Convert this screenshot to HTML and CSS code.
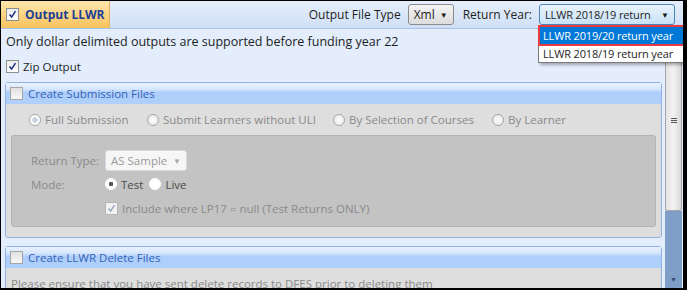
FILE: index.html
```html
<!DOCTYPE html>
<html lang="en">
<head>
    <meta charset="UTF-8">
    <title>Output LLWR</title>
    <link rel="stylesheet" href="styles.css">
</head>
<body>
<div class="window">
    <header class="toolbar">
        <div class="tab">
            <span class="cb on"><svg viewBox="0 0 13 13"><path d="M3 6.5 L5.5 9.5 L10 2.5" /></svg></span>
            <span class="tab-title">Output LLWR</span>
        </div>
        <div class="tools">
            <span class="lbl">Output File Type</span>
            <div class="select xml">Xml <span class="arrow">&#9660;</span></div>
            <span class="lbl">Return Year:</span>
            <div class="select year">LLWR 2018/19 return <span class="arrow">&#9660;</span>
                <ul class="dropdown">
                    <li class="picked">LLWR 2019/20 return year</li>
                    <li>LLWR 2018/19 return year</li>
                </ul>
            </div>
        </div>
    </header>
    <div class="main">
        <div class="content">
            <p class="note">Only dollar delimited outputs are supported before funding year 22</p>
            <label class="row zip">
                <span class="cb on"><svg viewBox="0 0 13 13"><path d="M3 6.5 L5.5 9.5 L10 2.5" /></svg></span>
                Zip Output
            </label>

            <section class="group">
                <div class="group-head">
                    <span class="cb"></span>
                    Create Submission Files
                </div>
                <div class="group-body">
                    <div class="radios">
                        <span class="radio-item full"><span class="radio sel"></span>Full Submission</span>
                        <span class="radio-item no-uli"><span class="radio"></span>Submit Learners without ULI</span>
                        <span class="radio-item courses"><span class="radio"></span>By Selection of Courses</span>
                        <span class="radio-item"><span class="radio"></span>By Learner</span>
                    </div>
                    <div class="panel">
                        <div class="field">
                            <span class="field-lbl">Return Type:</span>
                            <div class="select sample">AS Sample <span class="arrow">&#9660;</span></div>
                        </div>
                        <div class="field">
                            <span class="field-lbl">Mode:</span>
                            <span class="radio-item"><span class="radio dot"></span>Test</span>
                            <span class="radio-item"><span class="radio plain"></span>Live</span>
                        </div>
                        <div class="field">
                            <span class="field-lbl"></span>
                            <span class="cb on dim"><svg viewBox="0 0 13 13"><path d="M3 6.5 L5.5 9.5 L10 2.5" /></svg></span>
                            Include where LP17 = null (Test Returns ONLY)
                        </div>
                    </div>
                </div>
            </section>

            <section class="group">
                <div class="group-head">
                    <span class="cb"></span>
                    Create LLWR Delete Files
                </div>
                <div class="group-body">
                    <p class="warn">Please ensure that you have sent delete records to DFES prior to deleting them</p>
                </div>
            </section>
        </div>
        <div class="scrollbar">
            <div class="thumb"><span class="grip"></span></div>
            <div class="track"><span class="down">&#9660;</span></div>
        </div>
    </div>
</div>
</body>
</html>
```

FILE: styles.css
```css
body {
    margin: 0;
    font-family: "Open Sans", "Noto Sans", sans-serif;
    font-size: 11.5px;
    color: #1e1e1e;
    white-space: nowrap;
}

.window {
    width: 687px;
    height: 290px;
    box-sizing: border-box;
    border-style: solid;
    border-color: #000;
    border-width: 1px 4px 2px 1px;
    background: #e3edfb;
    overflow: hidden;
    display: flex;
    flex-direction: column;
}

.toolbar {
    height: 27px;
    flex: none;
    display: flex;
    background: linear-gradient(#e6effb, #cfdff5);
    border-bottom: 1px solid #a9c3e6;
    font-size: 12px;
}

.tab {
    width: 109px;
    display: flex;
    align-items: center;
    padding-left: 5px;
    box-sizing: border-box;
    background: linear-gradient(#fde6ac, #f8c25e);
    border-right: 1px solid #e3b25c;
}
.tab-title {
    margin-left: 6px;
    font-weight: bold;
    font-size: 12px;
    color: #1c3f94;
}

.tools {
    flex: 1;
    display: flex;
    align-items: center;
    justify-content: flex-end;
    padding-right: 8px;
}
.lbl {
    margin-right: 7px;
}
.lbl + .select {
    margin-right: 9px;
}

.select {
    position: relative;
    height: 21px;
    box-sizing: border-box;
    display: flex;
    align-items: center;
    padding: 0 5px;
    border: 1px solid #8c8c8c;
    border-radius: 3px;
    background: linear-gradient(#f4f4f4, #dcdcdc);
}
.arrow {
    font-size: 8px;
    margin-left: auto;
    letter-spacing: 0;
}
.xml {
    width: 46px;
}
.year {
    width: 136px;
    font-size: 11px;
    letter-spacing: -0.15px;
    margin-right: 0 !important;
    border-color: #4f86b8;
    background: linear-gradient(#e9f3fc, #c8e1f6);
}

.dropdown {
    position: absolute;
    top: 20px;
    left: -2px;
    width: 145px;
    margin: 0;
    padding: 0;
    list-style: none;
    background: #fff;
    border: 1px solid #7a7a7a;
    box-shadow: 2px 2px 3px rgba(0, 0, 0, 0.3);
    z-index: 2;
}
.dropdown li {
    height: 17px;
    line-height: 17px;
    padding-left: 4px;
    font-size: 11px;
}
.dropdown .picked {
    background: #0078d7;
    color: #fff;
    outline: 2px solid #ea3a40;
    outline-offset: -1px;
    height: 19px;
    line-height: 19px;
}

.main {
    flex: 1;
    display: flex;
    min-height: 0;
}
.content {
    flex: 1;
    padding: 0 3px 0 4px;
    overflow: hidden;
}

.note {
    margin: 4px 0 0 1px;
    font-size: 12.5px;
}
.row {
    display: flex;
    align-items: center;
    gap: 4px;
    margin: 9px 0 0 1px;
}

.cb {
    width: 13px;
    height: 13px;
    box-sizing: border-box;
    border: 1px solid #8e8f8f;
    background: linear-gradient(#ececec, #fff);
    display: inline-flex;
    flex: none;
}
.cb svg {
    width: 11px;
    height: 11px;
}
.cb path {
    fill: none;
    stroke: #1a2c80;
    stroke-width: 1.8;
}
.cb.dim {
    border-color: #b5b5b5;
    background: #f2f2f2;
}
.cb.dim path {
    stroke: #9aa7c8;
}

.group {
    margin-top: 8px;
    border: 1px solid #8fb2e2;
    border-radius: 3px;
    background: #dedede;
}
.group-head {
    height: 21px;
    display: flex;
    align-items: center;
    gap: 5px;
    padding-left: 4px;
    color: #3463b7;
    background: linear-gradient(#eaf2fe, #d5e6fd 30%, #aecefb 45%, #b0d0fb);
}
.group-head .cb {
    border-color: #a7a7a7;
    background: linear-gradient(#e2e2e2, #f7f7f7);
}
.group-body {
    padding: 0 5px 10px 5px;
    color: #8a8a8a;
}

.radios {
    display: flex;
    height: 31px;
    align-items: center;
    padding-left: 18px;
}
.radio-item {
    display: inline-flex;
    align-items: center;
    gap: 4px;
}
.radios .full {
    width: 118px;
}
.radios .no-uli {
    width: 186px;
}
.radios .courses {
    width: 159px;
}
.radio {
    width: 12px;
    height: 12px;
    box-sizing: border-box;
    border-radius: 50%;
    border: 1px solid #a8a8a8;
    background: radial-gradient(#fdfdfd, #e4e4e4);
}
.radio.sel {
    background: radial-gradient(#c8d4e4 0 2.5px, #fbfbfb 3px);
}
.radio.dot {
    border-color: #fff;
    background: radial-gradient(#555 0 2px, #fff 2.5px);
}
.radio.plain {
    border-color: #fff;
    background: #fff;
}

.panel {
    background: #c3c3c3;
    border: 1px solid #b3b3b3;
    border-radius: 3px;
    padding: 12px 0 6px 19px;
}
.field {
    display: flex;
    align-items: center;
    height: 24px;
}
.field-lbl {
    width: 74px;
    flex: none;
}
.field .cb {
    margin-right: 4px;
}
.field .radio-item {
    margin-right: 6px;
    color: #4a4a4a;
}
.sample {
    width: 82px;
    border-color: #d8d8d8;
    background: #f6f6f6;
    color: #9a9a9a;
}
.sample .arrow {
    color: #a9a9a9;
}

.warn {
    margin: 8px 0 0 0;
}

.scrollbar {
    width: 17px;
    margin-right: 1px;
    flex: none;
    display: flex;
    flex-direction: column;
}
.thumb {
    height: 182px;
    box-sizing: border-box;
    border: 1px solid #a6a6a6;
    border-radius: 2px;
    background: linear-gradient(90deg, #e4e4e4, #f3f3f3 50%, #d8d8d8);
    display: flex;
    align-items: center;
    justify-content: center;
}
.grip {
    width: 6px;
    height: 5px;
    border-top: 1px solid #555;
    border-bottom: 1px solid #555;
    box-sizing: border-box;
    background: linear-gradient(transparent 1px, #555 1px, #555 2px, transparent 2px);
}
.track {
    flex: 1;
    background: #7f9fc9;
    display: flex;
    align-items: flex-end;
    justify-content: center;
}
.down {
    font-size: 7px;
    color: #3a4a66;
    margin-bottom: 4px;
}
```
